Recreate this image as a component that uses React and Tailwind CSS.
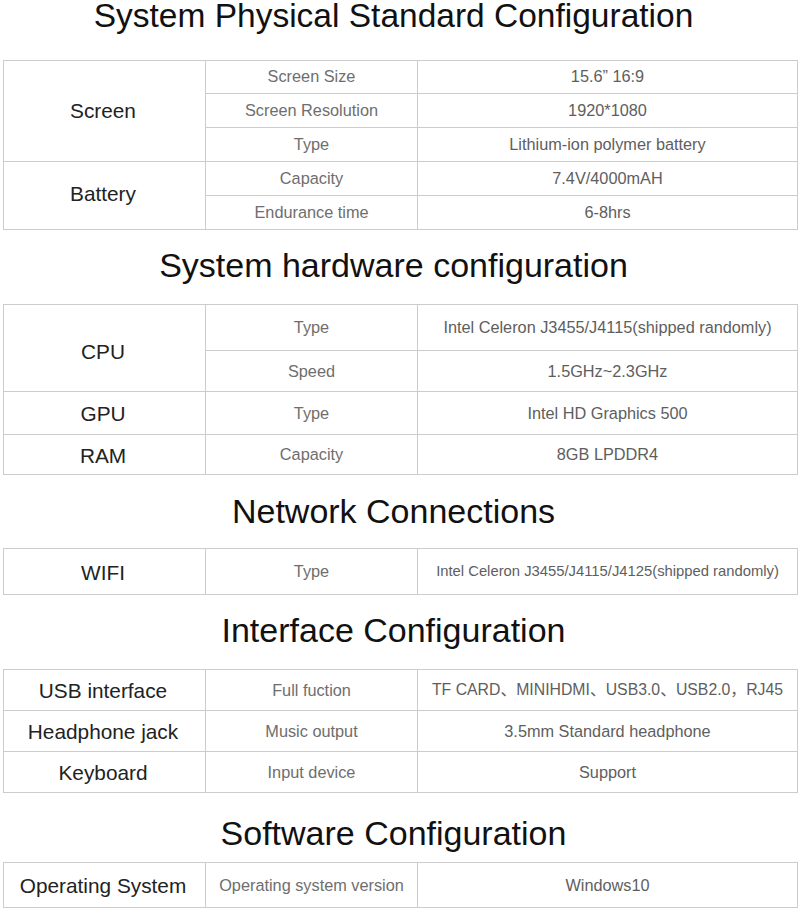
const font = { fontFamily: '"Liberation Sans", Arial, "Noto Sans CJK SC", sans-serif' }

const sections = [
  {
    title: 'System Physical Standard Configuration',
    head: 'h-[60px] pt-px text-[33.5px] leading-[30px]',
    rows: 'grid-rows-[33px_34px_34px_34px_34px]',
    groups: [
      {
        name: 'Screen',
        span: 'row-span-3',
        items: [
          ['Screen Size', '15.6” 16:9', null, 'pb-[2px]'],
          ['Screen Resolution', '1920*1080'],
          ['Type', 'Lithium-ion polymer battery'],
        ],
      },
      {
        name: 'Battery',
        span: 'row-span-2 pb-[3px]',
        items: [
          ['Capacity', '7.4V/4000mAH'],
          ['Endurance time', '6-8hrs'],
        ],
      },
    ],
  },
  {
    title: 'System hardware configuration',
    head: 'h-[74px] pt-[18px] text-[34px] leading-[34px]',
    rows: 'grid-rows-[46px_41px_43px_40px]',
    groups: [
      {
        name: 'CPU',
        span: 'row-span-2 pt-[8px]',
        items: [
          ['Type', 'Intel Celeron J3455/J4115(shipped randomly)'],
          ['Speed', '1.5GHz~2.3GHz'],
        ],
      },
      { name: 'GPU', items: [['Type', 'Intel HD Graphics 500']] },
      { name: 'RAM', items: [['Capacity', '8GB LPDDR4']] },
    ],
  },
  {
    title: 'Network Connections',
    head: 'h-[73px] pt-[19px] text-[34px] leading-[34px]',
    rows: 'grid-rows-[46px]',
    groups: [
      {
        name: 'WIFI',
        items: [['Type', 'Intel Celeron J3455/J4115/J4125(shipped randomly)', 'text-[14.8px]']],
      },
    ],
  },
  {
    title: 'Interface Configuration',
    head: 'h-[74px] pt-[18px] text-[34px] leading-[34px]',
    rows: 'grid-rows-[41px_41px_41px]',
    groups: [
      { name: 'USB interface', items: [['Full fuction', 'TF CARD、MINIHDMI、USB3.0、USB2.0，RJ45', 'text-[15.8px]']] },
      { name: 'Headphone jack', items: [['Music output', '3.5mm Standard headphone']] },
      { name: 'Keyboard', items: [['Input device', 'Support']] },
    ],
  },
  {
    title: 'Software Configuration',
    head: 'h-[69px] pt-[23px] text-[34px] leading-[34px]',
    rows: 'grid-rows-[45px]',
    groups: [
      { name: 'Operating System', items: [['Operating system version', 'Windows10']] },
    ],
  },
]

function Section({ s }) {
  return (
    <section>
      <div className={`${s.head} pr-[12px] text-center text-[#111] whitespace-nowrap`}>{s.title}</div>
      <div className={`ml-[3px] w-[795px] grid grid-cols-[202px_212px_380px] ${s.rows} border-l border-t border-[#cccccc]`}>
        {s.groups.map((g) => (
          <GroupCells key={g.name} g={g} />
        ))}
      </div>
    </section>
  )
}

function GroupCells({ g }) {
  return (
    <>
      <div className={`${g.span || 'pt-[2px]'} flex items-center justify-center pr-[3px] border-r border-b border-[#cccccc] text-[20.8px] text-[#222]`}>
        {g.name}
      </div>
      {g.items.map(([label, value, size, pad], i) => (
        <Row key={i} label={label} value={value} size={size} pad={pad} />
      ))}
    </>
  )
}

function Row({ label, value, size, pad }) {
  return (
    <>
      <div className={`${pad || ''} flex items-center justify-center border-r border-b border-[#cccccc] text-[16.3px] text-[#6e6e6e]`}>
        {label}
      </div>
      <div className={`${pad || ''} flex items-center justify-center border-r border-b border-[#cccccc] ${size || 'text-[16.3px]'} text-[#5e5e5e] whitespace-nowrap`}>
        {value}
      </div>
    </>
  )
}

export default function App() {
  return (
    <div className="w-[799px] h-[910px] bg-white overflow-hidden" style={font}>
      {sections.map((s) => (
        <Section key={s.title} s={s} />
      ))}
    </div>
  )
}
